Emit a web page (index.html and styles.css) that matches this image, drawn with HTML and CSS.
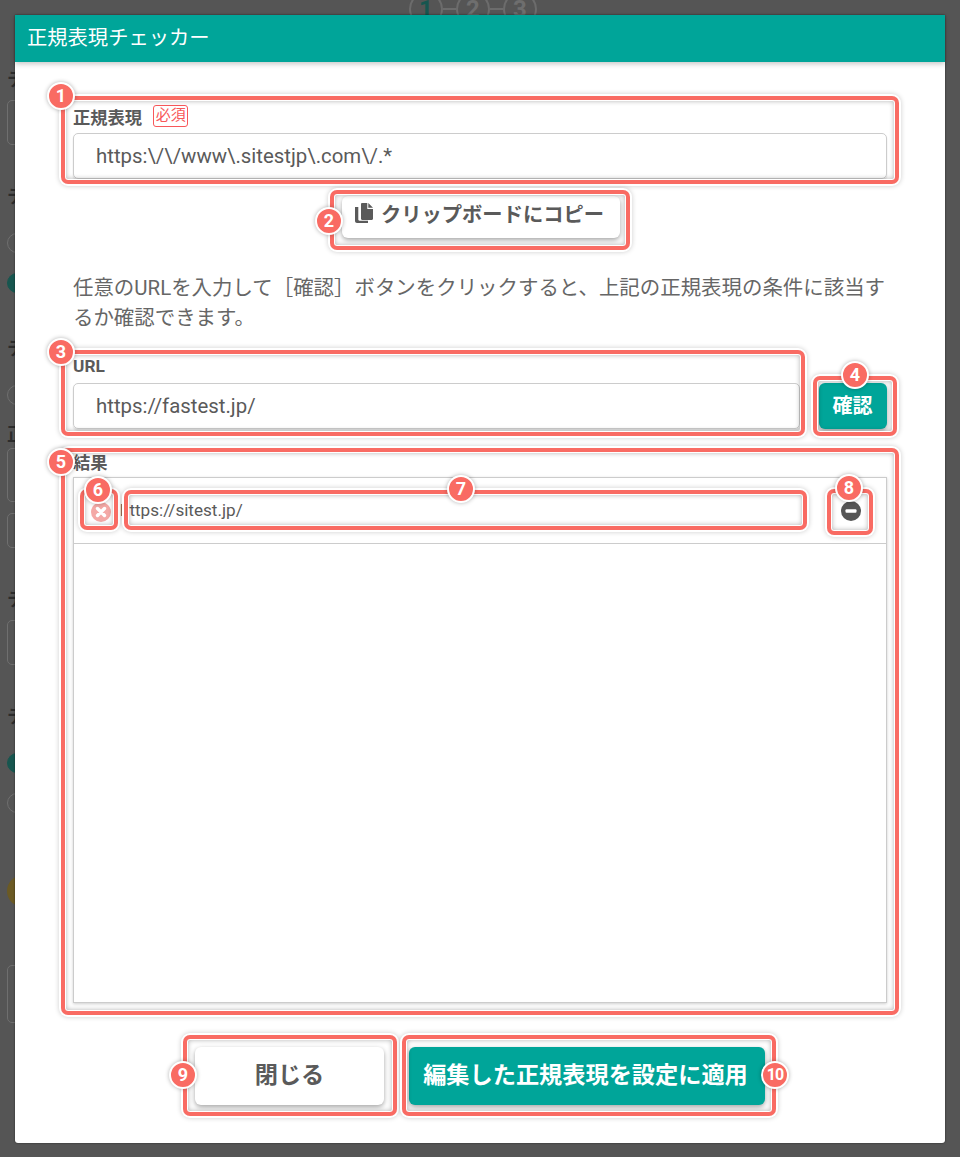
FILE: index.html
```html
<!DOCTYPE html>
<html lang="ja">
<head>
<meta charset="utf-8">
<title>正規表現チェッカー</title>
<link rel="stylesheet" href="styles.css">
</head>
<body>
<div class="backdrop">
  <div class="steps"><span class="step step-on">1</span><i class="link"></i><span class="step">2</span><i class="link"></i><span class="step">3</span></div>
  <div class="b-col">
    <div class="b-text b1">テ</div><div class="b-input b2"></div>
    <div class="b-text b3">テ</div><div class="b-radio b4"></div><div class="b-radio on b5"></div>
    <div class="b-text b6">テ</div><div class="b-radio b7"></div>
    <div class="b-text b8">正</div><div class="b-input b9"></div><div class="b-input b10"></div>
    <div class="b-text b11">テ</div><div class="b-input b12"></div>
    <div class="b-text b13">テ</div><div class="b-radio on b14"></div><div class="b-radio b15"></div>
    <div class="b-help b16"></div><div class="b-input b17"></div>
  </div>
</div>

<main class="modal">
  <header class="modal-head">正規表現チェッカー</header>
  <div class="modal-body">
    <div class="label-row first"><span class="label">正規表現</span><span class="required">必須</span></div>
    <div class="input">https:\/\/www\.sitestjp\.com\/.*</div>
    <div class="copy-row">
      <button class="btn btn-copy">
        <svg class="copy-icon" viewBox="0 0 18 20" aria-hidden="true"><path d="M7.200 0H12.300V6H18V15.800c0 .7-.5 1.200-1.200 1.200H7.200C6.500 17 6 16.500 6 15.800V1.200C6 .5 6.500 0 7.200 0zM13.300 0L18 4.700H13.300z"/><path d="M3.300 4V16.500c0 .7.500 1.200 1.200 1.200H13V20H2C.9 20 0 19.100 0 18V4z"/></svg>
        クリップボードにコピー
      </button>
    </div>
    <p class="desc">任意のURLを入力して［確認］ボタンをクリックすると、上記の正規表現の条件に該当するか確認できます。</p>
    <div class="label-row url"><span class="label">URL</span></div>
    <div class="url-row">
      <div class="input grow">https://fastest.jp/</div>
      <button class="btn btn-primary btn-check">確認</button>
    </div>
    <div class="label-row result"><span class="label">結果</span></div>
    <div class="result-box">
      <div class="result-item">
        <svg class="status-icon" viewBox="0 0 20 20" aria-hidden="true"><circle cx="10" cy="10" r="10" fill="#f4a9a6"/><path d="M6.500 6.500l7 7M13.500 6.500l-7 7" stroke="#fff" stroke-width="3.400" stroke-linecap="round"/></svg>
        <span class="item-url">https://sitest.jp/</span>
        <svg class="remove-icon" viewBox="0 0 20 20" aria-hidden="true"><circle cx="10" cy="10" r="10" fill="#555"/><rect x="4.500" y="8.200" width="11" height="3.600" rx="1" fill="#fff"/></svg>
      </div>
    </div>
    <div class="actions">
      <button class="btn btn-close">閉じる</button>
      <button class="btn btn-primary btn-apply">編集した正規表現を設定に適用</button>
    </div>
  </div>
</main>

<div class="marks">
  <div class="mark m1"></div><div class="mark m2"></div><div class="mark m3"></div><div class="mark m4"></div><div class="mark m5"></div>
  <div class="mark m6"></div><div class="mark m7"></div><div class="mark m8"></div><div class="mark m9"></div><div class="mark m10"></div>
  <span class="badge n1">1</span><span class="badge n2">2</span><span class="badge n3">3</span><span class="badge n4">4</span><span class="badge n5">5</span>
  <span class="badge n6">6</span><span class="badge n7">7</span><span class="badge n8">8</span><span class="badge n9">9</span><span class="badge n10">10</span>
</div>
</body>
</html>
```

FILE: styles.css
```css
* { box-sizing: border-box; }
html, body { margin: 0; height: 1157px; overflow: hidden; }
body {
  position: relative;
  padding: 15px;
  background: #555;
  color: #5a5a5a;
  font-family: Roboto, "Noto Sans CJK JP", sans-serif;
  text-spacing-trim: space-all;
}

/* dimmed page behind the dialog */
.backdrop { position: absolute; inset: 0; overflow: hidden; }
.steps { position: absolute; top: -8px; left: 409px; display: flex; align-items: center; }
.step {
  width: 34px; height: 34px; border: 2px solid #6c6c6c; border-radius: 50%;
  text-align: center; line-height: 30px; font-size: 24px; font-weight: 700; color: #6e6e6e;
}
.step-on { color: #17564f; }
.link { width: 13px; height: 2px; background: #6c6c6c; }
.b-col { padding-left: 7px; display: flex; flex-direction: column; align-items: flex-start; }
.b-text { height: 20px; line-height: 20px; font-size: 18px; font-weight: 700; color: #2c2c2c; }
.b-input { width: 60px; border: 1px solid #6f6f6f; border-radius: 5px; }
.b-radio { width: 20px; height: 20px; border: 1px solid #6f6f6f; border-radius: 50%; }
.b-radio.on { background: #17564f; border-color: #17564f; }
.b-help { width: 32px; height: 32px; border-radius: 50%; background: #6b5a24; }
.b1 { margin-top: 70px; }
.b2 { margin-top: 10px; height: 45px; }
.b3 { margin-top: 42px; }
.b4 { margin-top: 26px; }
.b5 { margin-top: 20px; }
.b6 { margin-top: 46px; }
.b7 { margin-top: 26px; }
.b8 { margin-top: 20px; }
.b9 { margin-top: 3px; height: 54px; }
.b10 { margin-top: 11px; height: 35px; }
.b11 { margin-top: 42px; }
.b12 { margin-top: 10px; height: 45px; }
.b13 { margin-top: 42px; }
.b14 { margin-top: 26px; }
.b15 { margin-top: 20px; }
.b16 { margin-top: 62px; }
.b17 { margin-top: 58px; height: 58px; }

/* dialog */
.modal {
  position: relative;
  width: 930px; height: 1128px;
  background: #fff;
  border-radius: 0 0 3px 3px;
  box-shadow: 0 0 2px rgba(0, 0, 0, .6);
}
.modal-head {
  height: 47px; padding-left: 12px;
  background: #00a599; color: #fff;
  font-size: 20.3px; line-height: 46px;
  box-shadow: 0 2px 5px rgba(0, 0, 0, .22);
  position: relative;
}
.modal-body { padding: 0 58px; }
.label-row { display: flex; align-items: center; height: 22px; }
.label-row.first { margin-top: 43px; margin-bottom: 6px; }
.label-row.url { margin-top: 22px; margin-bottom: 6px; }
.label-row.result { margin-top: 21px; margin-bottom: 5px; }
.label { font-size: 17.3px; font-weight: 700; color: #5a5a5a; }
.required {
  margin-left: 11px; width: 35px; height: 22px;
  border: 1.5px solid #f8585a; border-radius: 3px;
  color: #f8585a; font-size: 15px; line-height: 19px; text-align: center;
}
.input {
  height: 46px; padding-left: 22px;
  border: 1px solid #ccc; border-radius: 5px;
  box-shadow: 0 2px 2px rgba(0, 0, 0, .12);
  font-size: 20.4px; line-height: 44px; color: #5a5a5a;
}
.grow { flex: 1; }
.copy-row { display: flex; justify-content: center; margin-top: 17px; padding-left: 2px; }
.btn {
  border: 0; border-radius: 6px; background: #fff; color: #5a5a5a;
  font-family: inherit; font-weight: 700; padding: 0;
  box-shadow: 0 2px 5px rgba(0, 0, 0, .36);
}
.btn-copy {
  width: 278px; height: 42px; padding: 0 3px 8px 0; font-size: 20.3px;
  display: flex; align-items: center; justify-content: center; gap: 8px;
}
.copy-icon { width: 18px; height: 20px; fill: #5a5a5a; }
.desc { margin: 35px 0 0; font-size: 20.45px; line-height: 30px; color: #666; }
.url-row { display: flex; gap: 19px; }
.btn-primary { background: #00a599; color: #fff; }
.btn-check { width: 68px; height: 46px; padding: 0 1px 4px 0; font-size: 20px; }
.result-box { height: 526px; border: 1px solid #ccc; box-shadow: 0 1px 3px rgba(0, 0, 0, .2); }
.result-item {
  height: 66px; border-bottom: 1px solid #ccc;
  display: flex; align-items: center; padding: 0 25px 0 17px;
}
.status-icon { width: 20px; height: 20px; margin-top: 3px; }
.item-url { flex: 1; margin-left: 9px; margin-bottom: 2px; font-size: 17.1px; color: #5a5a5a; }
.remove-icon { width: 20px; height: 20px; margin-top: 1px; }
.actions { display: flex; justify-content: center; gap: 25px; margin-top: 44px; }
.btn-close { width: 189px; height: 58px; padding-bottom: 6px; font-size: 23.2px; }
.btn-apply { width: 356px; height: 58px; padding: 0 3px 6px 0; font-size: 23.2px; }

/* annotation layer lying over the screenshot */
.marks { position: absolute; inset: 0; pointer-events: none; }
.mark {
  position: absolute;
  border: 4px solid #f96b63; border-radius: 7px;
  box-shadow: 0 0 0 2px #fff, 0 0 5px 2px rgba(0, 0, 0, .2),
    inset 0 0 0 1px #fff, inset 0 0 5px 1px rgba(0, 0, 0, .3);
}
.m1 { left: 61px; top: 96px; width: 838px; height: 88px; }
.m2 { left: 330px; top: 190px; width: 300px; height: 60px; }
.m3 { left: 61px; top: 350px; width: 744px; height: 86px; }
.m4 { left: 813px; top: 376px; width: 84px; height: 60px; }
.m5 { left: 61px; top: 448px; width: 838px; height: 567px; }
.m6 { left: 80px; top: 489px; width: 38px; height: 41px; }
.m7 { left: 124px; top: 490px; width: 683px; height: 40px; }
.m8 { left: 827px; top: 489px; width: 46px; height: 46px; }
.m9 { left: 183px; top: 1035px; width: 214px; height: 81px; }
.m10 { left: 402px; top: 1035px; width: 374px; height: 81px; }
.badge {
  position: absolute;
  width: 28px; height: 28px; margin: -14px 0 0 -14px;
  border: 2px solid #fff; border-radius: 50%;
  background: #f96b63; color: #fff;
  font-size: 18px; font-weight: 700; line-height: 24px; text-align: center;
  box-shadow: 0 0 4px rgba(0, 0, 0, .3);
}
.n1 { left: 61px; top: 96px; }
.n2 { left: 329px; top: 221px; }
.n3 { left: 61px; top: 352px; }
.n4 { left: 855px; top: 375px; }
.n5 { left: 61px; top: 462px; }
.n6 { left: 98px; top: 490px; }
.n7 { left: 461px; top: 489px; }
.n8 { left: 849px; top: 488px; }
.n9 { left: 183px; top: 1075px; }
.n10 { left: 775px; top: 1075px; font-size: 16px; letter-spacing: -1px; }
```
